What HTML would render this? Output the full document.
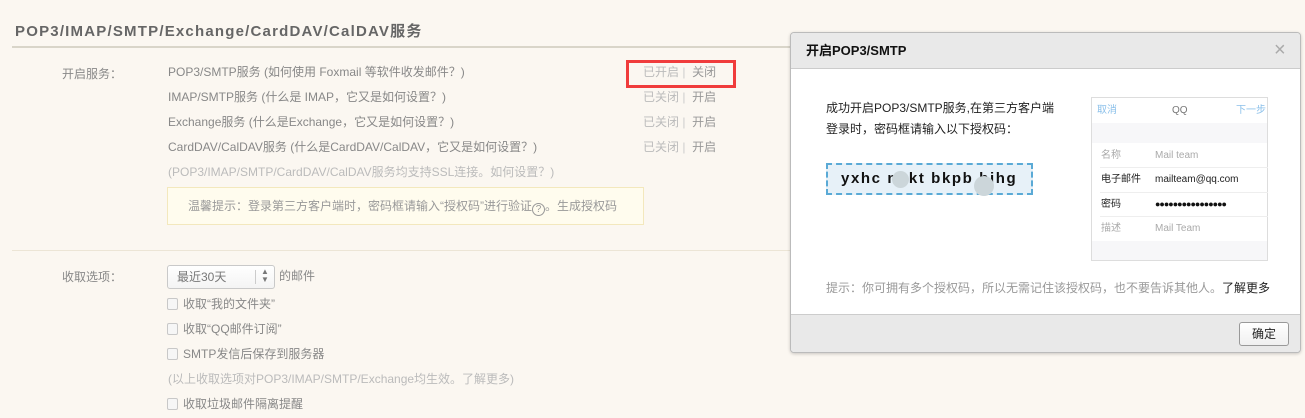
<!DOCTYPE html>
<html><head><meta charset="utf-8"><style>
*{margin:0;padding:0;box-sizing:border-box}
body{width:1305px;height:418px;background:#fbf7f1;font-family:"Liberation Sans","Microsoft YaHei","Noto Sans CJK SC",sans-serif;font-size:12px;color:#888;position:relative;overflow:hidden}
.a{position:absolute;white-space:nowrap;line-height:16px}
.g{color:#bbb}
.cb{position:absolute;width:11px;height:12px;border:1px solid #c8c8c8;border-radius:2px;background:#f6f6f6}
</style></head><body>
<div class="a" style="left:15px;top:23px;font-size:15px;font-weight:bold;color:#666;letter-spacing:1.2px;line-height:18px">POP3/IMAP/SMTP/Exchange/CardDAV/CalDAV服务</div>
<div style="position:absolute;left:12px;top:46px;width:780px;height:2px;background:#d9d5c9"></div>

<div class="a" style="left:62px;top:66px">开启服务：</div>
<div class="a" style="left:168px;top:64px">POP3/SMTP服务 (如何使用 Foxmail 等软件收发邮件？)</div>
<div class="a" style="left:168px;top:89px">IMAP/SMTP服务 (什么是 IMAP，它又是如何设置？)</div>
<div class="a" style="left:168px;top:114px">Exchange服务 (什么是Exchange，它又是如何设置？)</div>
<div class="a" style="left:168px;top:139px">CardDAV/CalDAV服务 (什么是CardDAV/CalDAV，它又是如何设置？)</div>
<div class="a g" style="left:168px;top:164px">(POP3/IMAP/SMTP/CardDAV/CalDAV服务均支持SSL连接。如何设置？)</div>
<div class="a" style="left:643px;top:64px"><span class="g">已开启</span> <span style="color:#ccc">|</span> &nbsp;<span style="color:#999">关闭</span></div>
<div class="a" style="left:643px;top:89px"><span class="g">已关闭</span> <span style="color:#ccc">|</span> &nbsp;<span style="color:#999">开启</span></div>
<div class="a" style="left:643px;top:114px"><span class="g">已关闭</span> <span style="color:#ccc">|</span> &nbsp;<span style="color:#999">开启</span></div>
<div class="a" style="left:643px;top:139px"><span class="g">已关闭</span> <span style="color:#ccc">|</span> &nbsp;<span style="color:#999">开启</span></div>
<div style="position:absolute;left:626px;top:60px;width:110px;height:28px;border:3px solid #f03c3c"></div>
<div style="position:absolute;left:167px;top:187px;width:477px;height:38px;background:#fffcee;border:1px solid #f3e8bd"></div>
<div class="a" style="left:188px;top:198px;color:#999">温馨提示：登录第三方客户端时，密码框请输入“授权码”进行验证<span style="display:inline-block;width:13px;height:13px;border:1px solid #999;border-radius:50%;font-size:10px;line-height:11px;text-align:center;vertical-align:-2px">?</span>。生成授权码</div>

<div style="position:absolute;left:12px;top:250px;width:780px;height:1px;background:#ece5d6"></div>
<div class="a" style="left:62px;top:269px">收取选项：</div>
<div style="position:absolute;left:167px;top:265px;width:108px;height:24px;border:1px solid #c9c9c9;border-radius:3px;background:linear-gradient(#fff,#f4f4f4)"></div>
<div class="a" style="left:177px;top:269px;color:#777">最近30天</div>
<div style="position:absolute;left:255px;top:270px;width:1px;height:14px;background:#ccc"></div>
<div class="a" style="left:261px;top:268px;font-size:8px;line-height:8px;color:#777">▲<br>▼</div>
<div class="a" style="left:279px;top:268px">的邮件</div>
<div class="cb" style="left:167px;top:298px"></div><div class="a" style="left:183px;top:296px">收取“我的文件夹”</div>
<div class="cb" style="left:167px;top:323px"></div><div class="a" style="left:183px;top:321px">收取“QQ邮件订阅”</div>
<div class="cb" style="left:167px;top:348px"></div><div class="a" style="left:183px;top:346px">SMTP发信后保存到服务器</div>
<div class="a g" style="left:168px;top:371px">(以上收取选项对POP3/IMAP/SMTP/Exchange均生效。了解更多)</div>
<div class="cb" style="left:167px;top:398px"></div><div class="a" style="left:183px;top:396px">收取垃圾邮件隔离提醒</div>

<div style="position:absolute;left:790px;top:32px;width:511px;height:321px;background:#fff;border:1px solid #bbb;border-radius:4px;box-shadow:0 1px 3px rgba(0,0,0,.2);overflow:hidden">
 <div style="position:absolute;left:0;top:0;width:100%;height:36px;background:#e9e9e9;border-bottom:1px solid #ccc"></div>
 <div class="a" style="left:15px;top:10px;font-size:13px;font-weight:bold;color:#111">开启POP3/SMTP</div>
 <div class="a" style="left:483px;top:6px;font-size:20px;color:#aaa;line-height:22px">×</div>
 <div class="a" style="left:35px;top:65px;color:#222;line-height:21px">成功开启POP3/SMTP服务,在第三方客户端<br>登录时，密码框请输入以下授权码：</div>
 <div style="position:absolute;left:35px;top:130px;width:207px;height:32px;background:#e7f1f8;border:2px dashed #5aaad6"></div>
 <div class="a" style="left:50px;top:136px;font-size:15px;font-weight:bold;color:#111;letter-spacing:1.6px;line-height:20px">yxhc nnkt bkpb bihg</div>
 <div style="position:absolute;left:101px;top:138px;width:17px;height:17px;border-radius:50%;background:#ccd6da"></div>
 <div style="position:absolute;left:183px;top:143px;width:20px;height:20px;border-radius:50%;background:#ccd6da"></div>
 <div style="position:absolute;left:300px;top:64px;width:177px;height:164px;border:1px solid #ddd;background:#f7f7f9">
  <div style="position:absolute;left:0;top:0;width:100%;height:25px;background:#fff"></div>
  <div class="a" style="left:5px;top:5px;font-size:10px;color:#8bc0ea">取消</div>
  <div class="a" style="left:80px;top:5px;font-size:10px;color:#777">QQ</div>
  <div class="a" style="left:144px;top:5px;font-size:10px;color:#8bc0ea">下一步</div>
  <div style="position:absolute;left:0;top:45px;width:100%;height:98px;background:#fff"></div>
  <div style="position:absolute;left:8px;top:69px;width:168px;height:1px;background:#eee"></div>
  <div style="position:absolute;left:8px;top:94px;width:168px;height:1px;background:#eee"></div>
  <div style="position:absolute;left:8px;top:118px;width:168px;height:1px;background:#eee"></div>
  <div class="a" style="left:9px;top:50px;font-size:10px;color:#aaa">名称</div><div class="a" style="left:63px;top:50px;font-size:10px;color:#aaa">Mail team</div>
  <div class="a" style="left:9px;top:74px;font-size:10px;color:#222">电子邮件</div><div class="a" style="left:63px;top:74px;font-size:10px;color:#222">mailteam@qq.com</div>
  <div class="a" style="left:9px;top:99px;font-size:10px;color:#222">密码</div><div class="a" style="left:63px;top:98px;font-size:9px;color:#111;letter-spacing:-1px">●●●●●●●●●●●●●●●●</div>
  <div class="a" style="left:9px;top:123px;font-size:10px;color:#aaa">描述</div><div class="a" style="left:63px;top:123px;font-size:10px;color:#aaa">Mail Team</div>
 </div>
 <div class="a" style="left:35px;top:247px;color:#999">提示：你可拥有多个授权码，所以无需记住该授权码，也不要告诉其他人。<span style="color:#222">了解更多</span></div>
 <div style="position:absolute;left:0;top:281px;width:100%;height:40px;background:#e9e9e9;border-top:1px solid #ccc"></div>
 <div style="position:absolute;left:448px;top:289px;width:50px;height:24px;border:1px solid #999;border-radius:3px;background:linear-gradient(#fff,#f0f0f0);text-align:center;line-height:22px;color:#222">确定</div>
</div>
</body></html>
